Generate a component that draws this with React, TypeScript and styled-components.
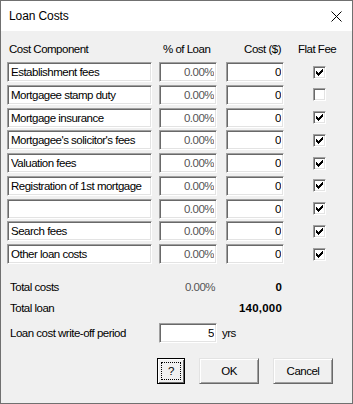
import React from 'react';
import styled, { createGlobalStyle, css } from 'styled-components';

const GlobalStyle = createGlobalStyle`
  html, body {
    margin: 0;
    padding: 0;
    background: #ffffff;
  }
  * {
    box-sizing: border-box;
  }
`;

const Window = styled.div`
  width: 353px;
  height: 404px;
  border: 1px solid #707070;
  background: #f0f0f0;
  font-family: 'Liberation Sans', Arial, sans-serif;
  font-size: 11.5px;
  letter-spacing: -0.5px;
  color: #000;
  display: flex;
  flex-direction: column;
`;

const TitleBar = styled.div`
  height: 30px;
  flex: none;
  background: #ffffff;
  display: flex;
  align-items: center;
  justify-content: space-between;
  padding: 0 10px 0 8px;
`;

const Title = styled.span`
  font-size: 12px;
  letter-spacing: -0.1px;
  color: #000;
`;

const Body = styled.div`
  padding: 10px 0 0 6px;
  display: flex;
  flex-direction: column;
`;

const columns = css`
  display: grid;
  grid-template-columns: 152px 67px 58px 1fr;
  align-items: center;
`;

const HeaderRow = styled.div`
  ${columns};
  height: 16px;
  margin-bottom: 5px;
`;

const HeaderCell = styled.div<{ $pad?: string; $align?: string }>`
  padding: ${p => p.$pad || '0'};
  text-align: ${p => p.$align || 'left'};
  white-space: nowrap;
`;

const Rows = styled.div`
  ${columns};
  grid-auto-rows: 20px;
  row-gap: 2.75px;
`;

const Field = styled.input<{ $width: number; $right?: boolean; $muted?: boolean }>`
  width: ${p => p.$width}px;
  height: 20px;
  margin: 0;
  padding: 0 2px 0 3px;
  border: 1px solid;
  border-color: #a0a0a0 #ffffff #ffffff #a0a0a0;
  box-shadow: inset 1px 1px 0 #696969, inset -1px -1px 0 #e3e3e3;
  background: #ffffff;
  font-family: 'Liberation Sans', Arial, sans-serif;
  font-size: 11.5px;
  letter-spacing: -0.5px;
  color: ${p => (p.$muted ? '#555555' : '#000000')};
  text-align: ${p => (p.$right ? 'right' : 'left')};
  outline: none;
`;

const CheckCell = styled.div`
  padding-left: 29px;
  display: flex;
  align-items: center;
`;

const CheckBox = styled.span`
  width: 13px;
  height: 13px;
  display: block;
  position: relative;
  background: #ffffff;
  border: 1px solid;
  border-color: #a0a0a0 #ffffff #ffffff #a0a0a0;
  box-shadow: inset 1px 1px 0 #696969, inset -1px -1px 0 #e3e3e3;

  svg {
    position: absolute;
    left: -1px;
    top: -1px;
  }
`;

const Totals = styled.div`
  margin-top: 14px;
  display: flex;
  flex-direction: column;
  gap: 3px;
`;

const TotalRow = styled.div`
  ${columns};
  height: 18px;
`;

const Label = styled.div`
  padding-left: 3px;
  white-space: nowrap;
`;

const Value = styled.div<{ $bold?: boolean; $muted?: boolean }>`
  width: 58px;
  padding-right: 2px;
  text-align: right;
  white-space: nowrap;
  font-weight: ${p => (p.$bold ? 700 : 400)};
  letter-spacing: ${p => (p.$bold ? '0.2px' : '-0.5px')};
  color: ${p => (p.$muted ? '#555555' : '#000000')};
`;

const PeriodRow = styled.div`
  margin-top: 6px;
  display: flex;
  align-items: center;
  height: 20px;
`;

const PeriodLabel = styled.div`
  width: 152px;
  padding-left: 3px;
  white-space: nowrap;
`;

const Unit = styled.span`
  margin-left: 5px;
`;

const Buttons = styled.div`
  margin-top: 15px;
  padding-left: 150px;
  display: flex;
  gap: 14px;
`;

const Button = styled.button<{ $width: number; $focused?: boolean }>`
  width: ${p => p.$width}px;
  height: 26px;
  margin: 0;
  padding: 0;
  position: relative;
  background: #f0f0f0;
  font-family: 'Liberation Sans', Arial, sans-serif;
  font-size: 11.5px;
  letter-spacing: -0.5px;
  color: #000;
  border: 1px solid;
  border-color: #e3e3e3 #696969 #696969 #e3e3e3;
  box-shadow: inset 1px 1px 0 #ffffff, inset -1px -1px 0 #a0a0a0;
  ${p =>
    p.$focused &&
    css`
      border-color: #000;
      box-shadow: inset 1px 1px 0 #ffffff, inset -1px -1px 0 #696969;
      &::after {
        content: '';
        position: absolute;
        inset: 3px;
        border: 1px dotted #000;
      }
    `}
`;

const CloseIcon = () => (
  <svg width="11" height="11" viewBox="0 0 11 11">
    <path d="M0.5 0.5L10.5 10.5M10.5 0.5L0.5 10.5" stroke="#000" strokeWidth="1" fill="none" />
  </svg>
);

const CheckMark = () => (
  <svg width="13" height="13" viewBox="0 0 13 13" shapeRendering="crispEdges">
    <path
      d="M9 3h1v1h-1z M8 4h2v1h-2z M3 5h1v1h-1z M7 5h3v1h-3z M3 6h2v1h-2z M6 6h3v1h-3z M3 7h5v1h-5z M4 8h3v1h-3z M5 9h1v1h-1z"
      fill="#000"
    />
  </svg>
);

const costRows = [
  { name: 'Establishment fees', flat: true },
  { name: 'Mortgagee stamp duty', flat: false },
  { name: 'Mortgage insurance', flat: true },
  { name: "Mortgagee's solicitor's fees", flat: true },
  { name: 'Valuation fees', flat: true },
  { name: 'Registration of 1st mortgage', flat: true },
  { name: '', flat: true },
  { name: 'Search fees', flat: true },
  { name: 'Other loan costs', flat: true },
];

const App = () => {
  return (
    <>
      <GlobalStyle />
      <Window>
        <TitleBar>
          <Title>Loan Costs</Title>
          <CloseIcon />
        </TitleBar>
        <Body>
          <HeaderRow>
            <HeaderCell $pad="0 0 0 2px">Cost Component</HeaderCell>
            <HeaderCell $pad="0 0 0 4px">% of Loan</HeaderCell>
            <HeaderCell $pad="0 3px 0 0" $align="right">Cost ($)</HeaderCell>
            <HeaderCell $pad="0 0 0 14px">Flat Fee</HeaderCell>
          </HeaderRow>
          <Rows>
            {costRows.map((row, i) => (
              <React.Fragment key={i}>
                <Field $width={145} readOnly value={row.name} />
                <Field $width={58} $right $muted readOnly value="0.00%" />
                <Field $width={58} $right readOnly value="0" />
                <CheckCell>
                  <CheckBox>{row.flat && <CheckMark />}</CheckBox>
                </CheckCell>
              </React.Fragment>
            ))}
          </Rows>
          <Totals>
            <TotalRow>
              <Label>Total costs</Label>
              <Value $muted>0.00%</Value>
              <Value $bold>0</Value>
            </TotalRow>
            <TotalRow>
              <Label>Total loan</Label>
              <div />
              <Value $bold>140,000</Value>
            </TotalRow>
          </Totals>
          <PeriodRow>
            <PeriodLabel>Loan cost write-off period</PeriodLabel>
            <Field $width={58} $right readOnly value="5" />
            <Unit>yrs</Unit>
          </PeriodRow>
          <Buttons>
            <Button $width={28} $focused>?</Button>
            <Button $width={60}>OK</Button>
            <Button $width={60}>Cancel</Button>
          </Buttons>
        </Body>
      </Window>
    </>
  );
};

export default App;
